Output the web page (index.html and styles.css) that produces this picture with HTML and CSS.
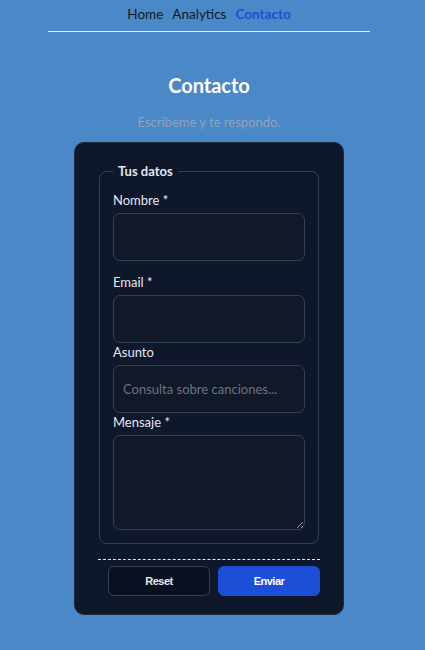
FILE: index.html
```html
<!DOCTYPE html>
<html lang="es">
<head>
<meta charset="utf-8">
<title>Contacto</title>
<link rel="stylesheet" href="styles.css">
</head>
<body>
<div class="page">
  <nav class="nav">
    <a class="nav-link" href="#">Home</a>
    <a class="nav-link" href="#">Analytics</a>
    <a class="nav-link active" href="#">Contacto</a>
  </nav>
  <h1 class="title">Contacto</h1>
  <p class="subtitle">Escribeme y te respondo.</p>
  <form class="card">
    <fieldset class="fieldset">
      <legend class="legend">Tus datos</legend>
      <div class="field field-spaced">
        <label class="label" for="nombre">Nombre *</label>
        <input class="input" id="nombre" type="text">
      </div>
      <div class="field">
        <label class="label" for="email">Email *</label>
        <input class="input" id="email" type="email">
      </div>
      <div class="field">
        <label class="label" for="asunto">Asunto</label>
        <input class="input" id="asunto" type="text" placeholder="Consulta sobre canciones...">
      </div>
      <div class="field">
        <label class="label" for="mensaje">Mensaje *</label>
        <textarea class="input textarea" id="mensaje"></textarea>
      </div>
    </fieldset>
    <div class="actions">
      <button class="btn btn-reset" type="reset">Reset</button>
      <button class="btn btn-send" type="button">Enviar</button>
    </div>
  </form>
</div>
</body>
</html>
```
FILE: styles.css
```css
* { box-sizing: border-box; }
html, body { margin: 0; padding: 0; }
body {
  background: #4a88c7;
  font-family: "Lato", "Noto Sans", sans-serif;
  color: #e2e8f0;
  height: 650px;
  overflow: hidden;
}
.page {
  width: 418px;
  display: flex;
  flex-direction: column;
  align-items: center;
}
.nav {
  width: 322px;
  display: flex;
  justify-content: center;
  gap: 9px;
  padding: 4px 0 7px;
  border-bottom: 1px solid #e6f0fb;
}
.nav-link {
  font-size: 13.5px;
  line-height: 20px;
  color: #111827;
  text-decoration: none;
}
.nav-link.active {
  color: #1d4ed8;
  font-weight: 700;
}
.title {
  margin: 40px 0 0;
  font-size: 20px;
  line-height: 26px;
  font-weight: 700;
  color: #ffffff;
}
.subtitle {
  margin: 15px 0 0;
  font-size: 13px;
  line-height: 18px;
  color: #94a3b8;
}
.card {
  margin-top: 11px;
  width: 270px;
  background: #0f172a;
  border: 1px solid #1e293b;
  border-radius: 10px;
  padding: 19px 23px 18px;
}
.fieldset {
  margin: 0 1px;
  border: 1px solid #334155;
  border-radius: 8px;
  padding: 11px 13px 13px;
  min-width: 0;
}
.legend {
  padding: 0 5px;
  font-size: 13px;
  line-height: 18px;
  font-weight: 700;
  color: #e2e8f0;
}
.field {
  display: flex;
  flex-direction: column;
}
.field-spaced { margin-bottom: 12px; }
.label {
  font-size: 13px;
  line-height: 18px;
  color: #e2e8f0;
  margin-bottom: 4px;
}
.input {
  display: block;
  width: 100%;
  height: 48px;
  background: #111827;
  border: 1px solid #334155;
  border-radius: 7px;
  padding: 0 9px;
  font-family: inherit;
  font-size: 13px;
  color: #e2e8f0;
  outline: none;
}
.input::placeholder { color: #6b7280; }
.textarea {
  height: 95px;
  padding: 8px 9px;
  resize: vertical;
}
.actions {
  margin-top: 15px;
  border-top: 1px dashed #e2e8f0;
  padding-top: 6px;
  display: flex;
  justify-content: flex-end;
  gap: 8px;
}
.btn {
  width: 102px;
  height: 30px;
  border-radius: 6px;
  font-family: "Liberation Sans", Arial, sans-serif;
  font-size: 11px;
  letter-spacing: -0.5px;
  font-weight: 700;
  color: #e5e7eb;
  cursor: pointer;
}
.btn-reset {
  background: #0a1020;
  border: 1px solid #334155;
}
.btn-send {
  background: #1d4ed8;
  border: 1px solid #1d4ed8;
  color: #ffffff;
}
```
